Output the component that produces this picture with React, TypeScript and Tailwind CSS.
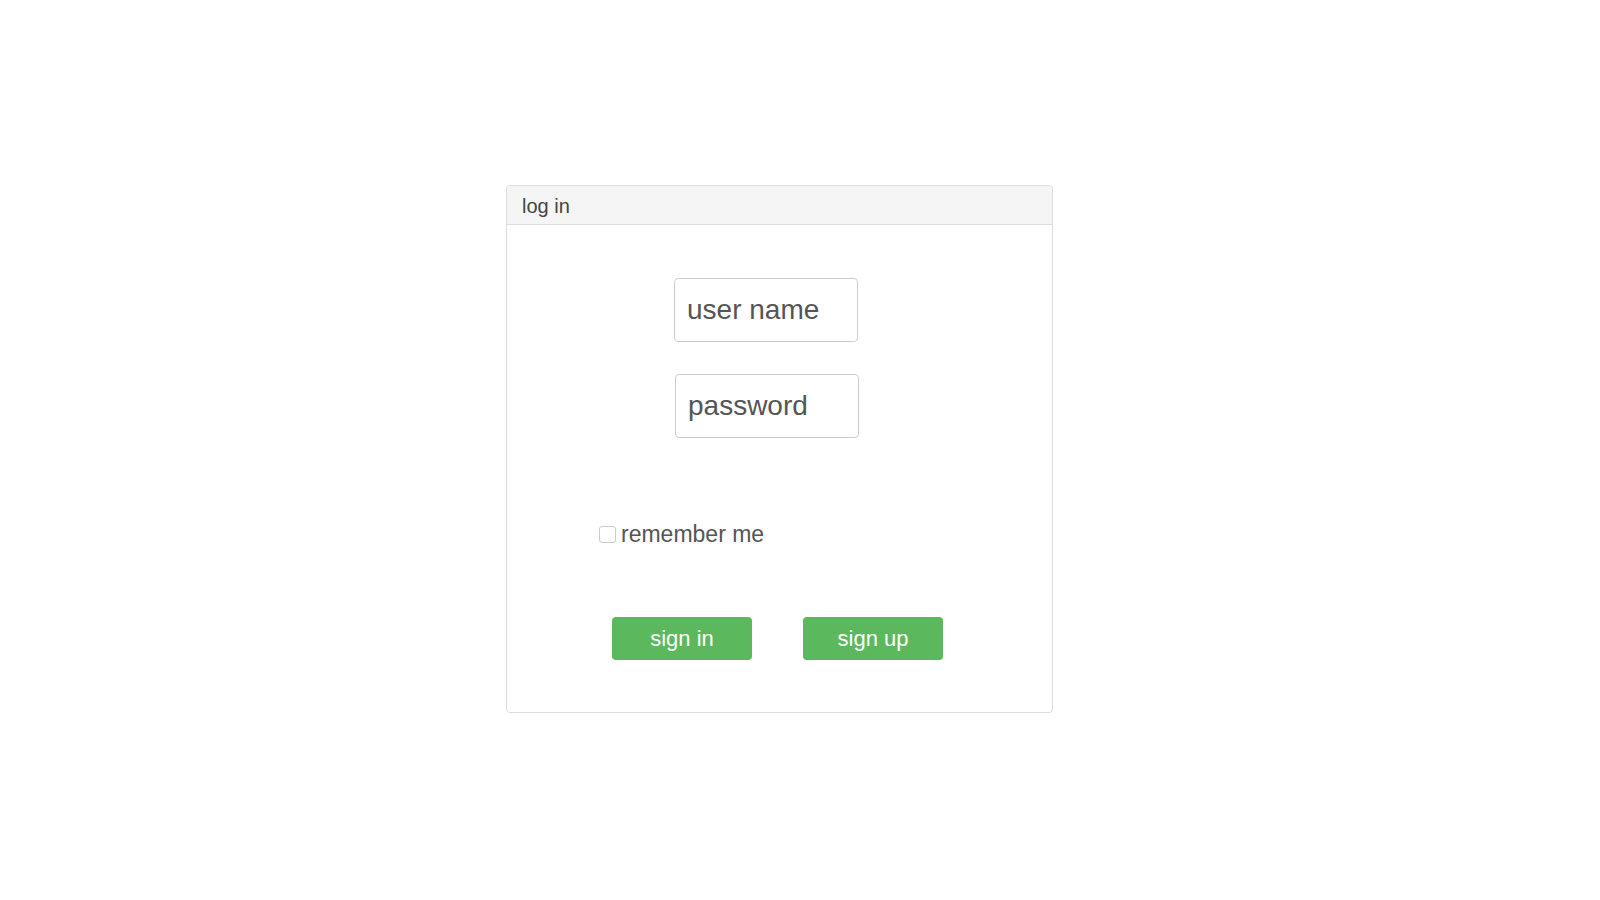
import { useState } from "react";

export default function App() {
  const [remember, setRemember] = useState(false);

  return (
    <div
      className="min-h-screen w-full bg-white pt-[185px] pl-[506px]"
      style={{ fontFamily: '"Liberation Sans", Arial, Helvetica, sans-serif' }}
    >
      {/* ================= PANEL ================= */}
      <div className="w-[547px] rounded border border-[#dddddd] bg-white">
        {/* header */}
        <div className="flex h-[39px] items-center rounded-t border-b border-[#dddddd] bg-[#f5f5f5] pl-[15px] pt-[1px] text-[20px] text-[#444444]">
          log in
        </div>

        {/* body */}
        <div className="flex flex-col pt-[53px] pb-[52px]">
          <div className="pl-[167px]">
            <input
              type="text"
              placeholder="user name"
              className="h-[64px] w-[184px] rounded border border-[#cccccc] px-[12px] text-[28px] text-[#555555] outline-none placeholder:text-[#555555]"
            />
          </div>

          <div className="mt-[32px] pl-[168px]">
            <input
              type="password"
              placeholder="password"
              className="h-[64px] w-[184px] rounded border border-[#cccccc] px-[12px] text-[28px] text-[#555555] outline-none placeholder:text-[#555555]"
            />
          </div>

          {/* remember me */}
          <label className="mt-[82px] flex h-[28px] cursor-pointer items-center gap-[5px] pl-[92px] text-[23px] text-[#555555]">
            <input
              type="checkbox"
              checked={remember}
              onChange={(e) => setRemember(e.target.checked)}
              className="h-[17px] w-[17px] appearance-none rounded-[3px] border border-[#cccccc] bg-white checked:bg-[#5cb85c]"
            />
            <span className="leading-none">remember me</span>
          </label>

          {/* buttons */}
          <div className="mt-[69px] flex gap-[51px] pl-[105px]">
            <button className="h-[43px] w-[140px] rounded bg-[#5cb85c] text-[22px] text-white hover:bg-[#4cae4c]">
              sign in
            </button>
            <button className="h-[43px] w-[140px] rounded bg-[#5cb85c] text-[22px] text-white hover:bg-[#4cae4c]">
              sign up
            </button>
          </div>
        </div>
      </div>
    </div>
  );
}
